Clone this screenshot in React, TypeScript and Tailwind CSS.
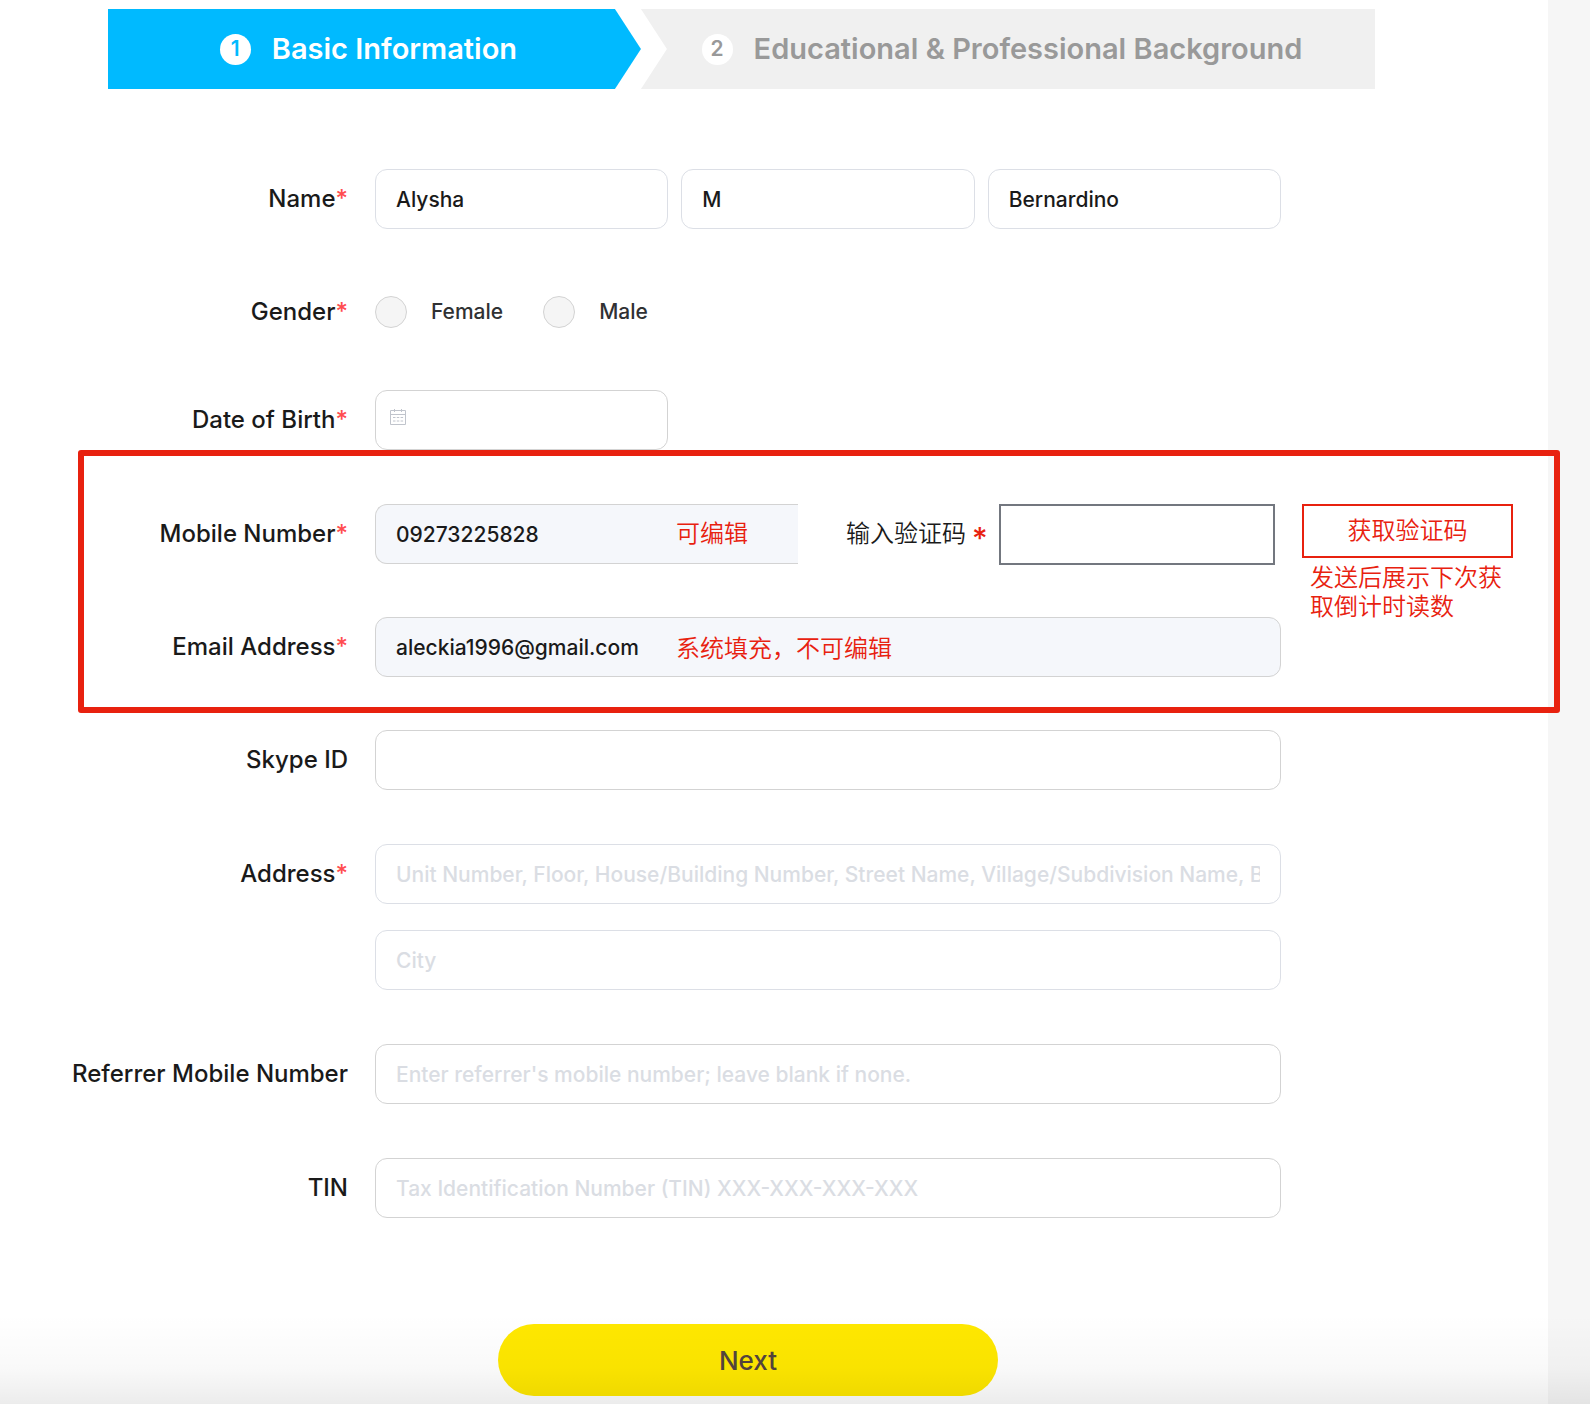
import type { ReactNode } from "react";

const control =
  "h-[60px] w-full min-w-0 rounded-xl border bg-white px-5 text-[21px] font-medium text-[#1a1a1a] outline-none placeholder:font-medium placeholder:text-[#dadde3] placeholder:opacity-100";
const soft = control + " border-[#dcdfe6]";
const plain = control + " border-[#d3d3d3]";
const filled = "flex h-[60px] min-w-0 items-center border border-[#d3d3d3] bg-[#f5f7fb] pl-5";
const filledInput = "h-full w-[280px] shrink-0 bg-transparent text-[21px] font-medium text-[#1a1a1a] outline-none";
const note = "whitespace-nowrap text-[24px] font-[350] text-[#e8210f]";

function Label({ text, htmlFor, required, framed }: { text: string; htmlFor: string; required?: boolean; framed?: boolean }) {
  return (
    <label
      htmlFor={htmlFor}
      className={
        (framed ? "w-[264px]" : "w-[348px]") +
        " mr-[27px] flex h-[60px] shrink-0 items-center justify-end whitespace-nowrap text-[24px] font-medium text-[#1a1a1a]"
      }
    >
      {text}
      {required && <span className="text-[#ff4d4f]">*</span>}
    </label>
  );
}

function Row({ children }: { children: ReactNode }) {
  return <div className="flex items-start pr-[267px]">{children}</div>;
}

function CalendarIcon() {
  return (
    <svg width="18" height="18" viewBox="0 0 18 18" fill="none" stroke="#c0c4cc" className="shrink-0" aria-hidden="true">
      <path d="M1.5 2.5h15v14h-15zM1.5 6.5h15" />
      <path d="M5.5 1v3M12.5 1v3" />
      <path d="M4 9.5h2.5M7.8 9.5h2.5M11.6 9.5h2.5M4 13h2.5M7.8 13h2.5M11.6 13h2.5" />
    </svg>
  );
}

function Radio({ id, text }: { id: string; text: string }) {
  return (
    <label htmlFor={id} className="flex items-center gap-6 text-[21px] font-medium text-[#303133]">
      <input
        id={id}
        type="radio"
        name="gender"
        className="size-8 appearance-none rounded-full border border-[#d3d3d3] bg-[#f5f5f5] checked:border-8 checked:border-[#00baff]"
      />
      {text}
    </label>
  );
}

export default function App() {
  return (
    <div className="relative min-h-screen bg-[#f6f6f6] pr-[42px] font-['Inter','Noto_Sans_CJK_SC',sans-serif]">
      <form className="min-h-screen bg-white pt-[9px] pb-2" onSubmit={(e) => e.preventDefault()}>
        <ol className="mr-[173px] ml-[108px] flex h-20 text-[29px] font-semibold">
          <li className="flex flex-[531] items-center justify-center gap-[21px] bg-[#00baff] pr-3 whitespace-nowrap text-white [clip-path:polygon(0_0,calc(100%_-_26px)_0,100%_50%,calc(100%_-_26px)_100%,0_100%)]">
            <span className="flex size-[31px] items-center justify-center rounded-full bg-white text-[21px] text-[#00baff]">1</span>
            Basic Information
          </li>
          <li className="flex flex-[736] items-center justify-center gap-[21px] bg-[#f0f0f0] pr-3 whitespace-nowrap text-[#999] [clip-path:polygon(0_0,100%_0,100%_100%,0_100%,26px_50%)]">
            <span className="flex size-[31px] items-center justify-center rounded-full bg-white text-[21px]">2</span>
            Educational &amp; Professional Background
          </li>
        </ol>

        <div className="mt-20 flex flex-col">
          <Row>
            <Label text="Name" htmlFor="first" required />
            <div className="grid flex-1 grid-cols-3 gap-[13px]">
              <input id="first" className={soft} defaultValue="Alysha" />
              <input aria-label="Middle name" className={soft} defaultValue="M" />
              <input aria-label="Last name" className={soft} defaultValue="Bernardino" />
            </div>
          </Row>
          <div className="mt-[54px] flex h-[53px] items-center pt-1">
            <Label text="Gender" htmlFor="female" required />
            <div className="flex gap-10">
              <Radio id="female" text="Female" />
              <Radio id="male" text="Male" />
            </div>
          </div>
          <div className="mt-[54px]">
            <Row>
              <Label text="Date of Birth" htmlFor="dob" required />
              <div className="grid flex-1 grid-cols-3 gap-[13px]">
                <div className="flex h-[60px] items-center gap-3 rounded-xl border border-[#d3d3d3] bg-white px-[13px] pb-[6px]">
                  <CalendarIcon />
                  <input id="dob" className="min-w-0 flex-1 bg-transparent text-[21px] font-medium outline-none" />
                </div>
              </div>
            </Row>
          </div>
        </div>

        <section className="relative mr-[-12px] ml-[78px] flex flex-col gap-[53px] rounded-[3px] border-[6px] border-[#e8210f] pt-12 pb-[30px]">
          <div className="flex h-[60px] items-start pr-[41px]">
            <Label text="Mobile Number" htmlFor="mobile" required framed />
            <div className={filled + " flex-1 rounded-l-xl border-r-0"}>
              <input id="mobile" className={filledInput} defaultValue="09273225828" />
              <span className={note}>可编辑</span>
            </div>
            <label
              htmlFor="code"
              className="ml-12 flex h-[60px] items-center gap-[6px] text-[24px] font-[350] whitespace-nowrap text-[#1a1a1a]"
            >
              输入验证码
              <span className="w-[15px] pt-2 text-[30px] leading-8 font-medium text-[#e8210f]">*</span>
            </label>
            <input id="code" className="ml-3 h-[61px] w-[276px] border-2 border-[#73777f] bg-white px-4 text-[21px] outline-none" />
            <div className="relative ml-[27px] w-[211px]">
              <button type="button" className={note + " h-[54px] w-full border-2 border-[#e8210f] bg-white"}>
                获取验证码
              </button>
              <p className="absolute top-[59px] left-2 w-[200px] text-[24px] leading-[29px] font-[350] text-[#e8210f]">
                发送后展示下次获取倒计时读数
              </p>
            </div>
          </div>
          <div className="flex items-start pr-[273px]">
            <Label text="Email Address" htmlFor="email" required framed />
            <div className={filled + " flex-1 rounded-xl"}>
              <input id="email" readOnly className={filledInput} defaultValue="aleckia1996@gmail.com" />
              <span className={note + " pt-1"}>系统填充，不可编辑</span>
            </div>
          </div>
        </section>

        <div className="mt-[17px] flex flex-col gap-[54px]">
          <Row>
            <Label text="Skype ID" htmlFor="skype" />
            <input id="skype" className={plain} />
          </Row>
          <Row>
            <Label text="Address" htmlFor="address" required />
            <div className="flex min-w-0 flex-1 flex-col gap-[26px]">
              <input
                id="address"
                className={soft}
                placeholder="Unit Number, Floor, House/Building Number, Street Name, Village/Subdivision Name, Barangay"
              />
              <input aria-label="City" className={soft} placeholder="City" />
            </div>
          </Row>
          <Row>
            <Label text="Referrer Mobile Number" htmlFor="referrer" />
            <input id="referrer" className={plain} placeholder="Enter referrer's mobile number; leave blank if none." />
          </Row>
          <Row>
            <Label text="TIN" htmlFor="tin" />
            <input id="tin" className={plain} placeholder="Tax Identification Number (TIN) XXX-XXX-XXX-XXX" />
          </Row>
        </div>

        <div className="mt-[106px] flex justify-center pr-[52px]">
          <button type="submit" className="h-[72px] w-[500px] rounded-full bg-[#ffe800] text-[26px] font-medium text-[#54443e]">
            Next
          </button>
        </div>
      </form>
      <div className="pointer-events-none absolute inset-x-0 bottom-0 h-[90px] bg-[linear-gradient(to_bottom,rgba(0,0,0,0),rgba(0,0,0,0.025)_60%,rgba(0,0,0,0.075))]" />
    </div>
  );
}
